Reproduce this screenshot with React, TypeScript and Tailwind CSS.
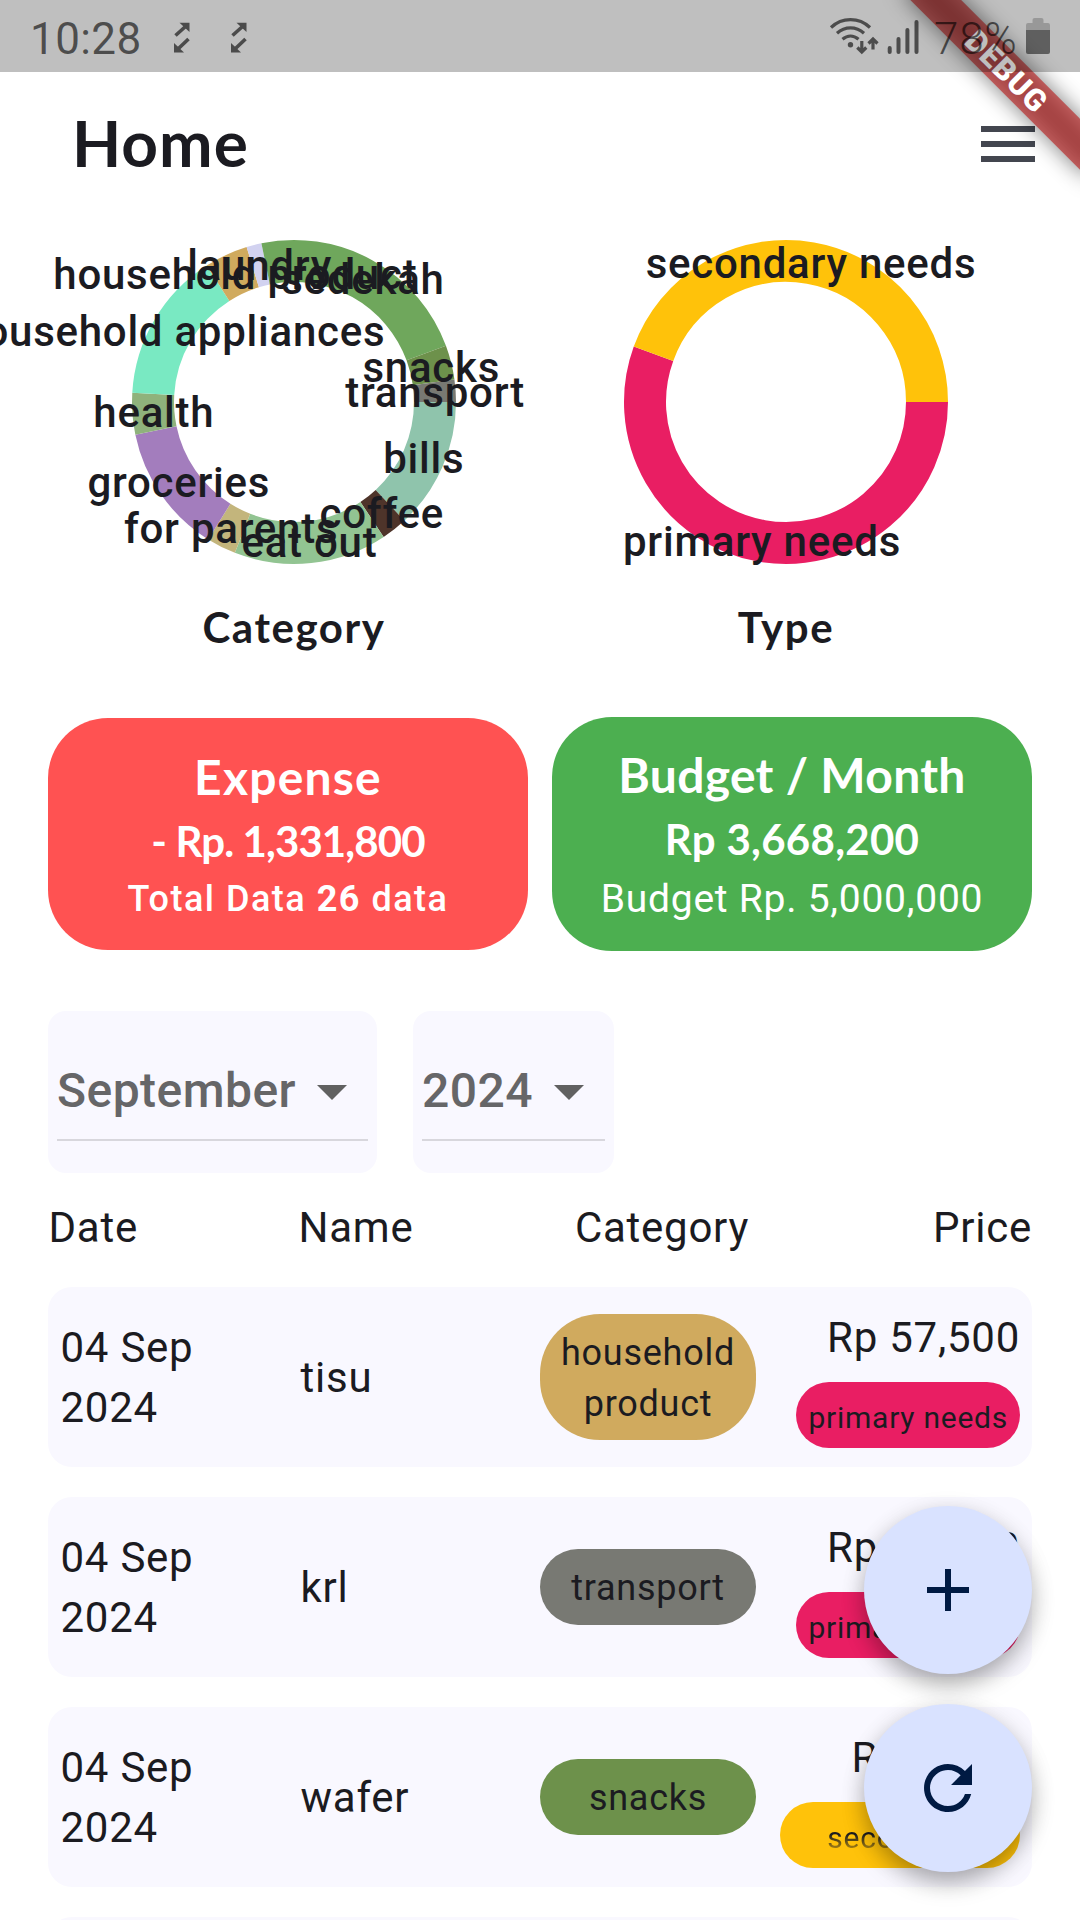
import React from "react";
import { MdAdd, MdArrowDropDown, MdMenu, MdRefresh } from "react-icons/md";

type Slice = { label: string; from: number; to: number; color: string };

const categorySlices: Slice[] = [
  { label: "bills", from: 0, to: 47.1, color: "#8fc4ac" },
  { label: "coffee", from: 47.1, to: 56.4, color: "#4e342a" },
  { label: "eat out", from: 56.4, to: 111.4, color: "#92c492" },
  { label: "for parents", from: 111.4, to: 122, color: "#c3b57c" },
  { label: "groceries", from: 122, to: 168.3, color: "#a37dbd" },
  { label: "health", from: 168.3, to: 183.3, color: "#8fb27c" },
  { label: "household appliances", from: 183.3, to: 237.4, color: "#79e9c2" },
  { label: "household product", from: 237.4, to: 253, color: "#d0aa5e" },
  { label: "laundry", from: 253, to: 258.4, color: "#d2d2f0" },
  { label: "sedekah", from: 258.4, to: 339.7, color: "#6fa75c" },
  { label: "snacks", from: 339.7, to: 352, color: "#6d914b" },
  { label: "transport", from: 352, to: 360, color: "#787973" },
];

const typeSlices: Slice[] = [
  { label: "primary needs", from: 0, to: 200, color: "#e91e63" },
  { label: "secondary needs", from: 200, to: 360, color: "#ffc20a" },
];

const rows = [
  { name: "tisu", category: "household product", categoryBg: "bg-[#d0aa5e]", price: "Rp 57,500", type: "primary needs", typeBg: "bg-[#e91e63]" },
  { name: "krl", category: "transport", categoryBg: "bg-[#787973]", price: "Rp 10,000", type: "primary needs", typeBg: "bg-[#e91e63]" },
  { name: "wafer", category: "snacks", categoryBg: "bg-[#6d914b]", price: "Rp 2,000", type: "secondary needs", typeBg: "bg-[#ffc20a]" },
  { name: "kopi", category: "coffee", categoryBg: "bg-[#4e342a]", price: "Rp 8,000", type: "secondary needs", typeBg: "bg-[#ffc20a]" },
];

const RADIUS = 141;
const CX = 246;
const CY = 186;

function point(angle: number) {
  const a = (angle * Math.PI) / 180;
  return { x: CX + RADIUS * Math.cos(a), y: CY + RADIUS * Math.sin(a) };
}

function Donut({ slices, title }: { slices: Slice[]; title: string }) {
  return (
    <div className="flex w-[492px] flex-col items-center">
      <svg width="492" height="372" viewBox="0 0 492 372" className="overflow-visible">
        {slices.map((s) => {
          const a = point(s.from);
          const b = point(s.to);
          const large = s.to - s.from > 180 ? 1 : 0;
          return (
            <path
              key={s.label}
              d={`M${a.x} ${a.y}A${RADIUS} ${RADIUS} 0 ${large} 1 ${b.x} ${b.y}`}
              fill="none"
              stroke={s.color}
              strokeWidth="42"
            />
          );
        })}
        {slices.map((s) => {
          const m = point((s.from + s.to) / 2);
          return (
            <text
              key={s.label}
              x={m.x + 0.5}
              y={m.y + 14.9}
              textAnchor="middle"
              className="fill-[#1b1b21] text-[42px] font-medium tracking-[0.75px]"
            >
              {s.label}
            </text>
          );
        })}
      </svg>
      <h2 className="pt-[3px] font-['Lato',sans-serif] text-[42px] leading-[72px] font-bold tracking-[1.600px]">{title}</h2>
    </div>
  );
}

function Dropdown({ label }: { label: string }) {
  return (
    <div className="h-[162px] rounded-[18px] bg-[#f9f8ff] px-[9px]">
      <div className="flex h-[130px] items-center border-b-2 border-[#d8d7dd] pt-[32px]">
        <span className="text-[48px] leading-[72px] font-medium tracking-[0.45px] text-[#666668]">{label}</span>
        <MdArrowDropDown className="size-[72px] text-[#616161]" />
      </div>
    </div>
  );
}

function SyncArrows() {
  return (
    <svg width="18" height="31" viewBox="0 0 18 31" fill="#4b4b4b" stroke="#4b4b4b">
      <path d="M6.500 .8H16.500V10Z" stroke="none" />
      <path d="M1 21V30.500H11Z" stroke="none" />
      <path d="M2.500 13.500 12.500 4.500M15.500 17 5.500 26.500" strokeWidth="3.600" />
    </svg>
  );
}

function StatusBar() {
  return (
    <div className="absolute inset-x-0 top-0 flex h-[72px] items-center justify-between bg-black/25 pr-[30px] pl-[30px] tracking-normal">
      <div className="flex items-center">
        <span className="w-[143px] pt-[6px] text-[44px] leading-[66px] tracking-[0.4px] text-black/60">10:28</span>
        <div className="flex gap-[39px] pt-[2px]">
          <SyncArrows />
          <SyncArrows />
        </div>
      </div>
      <div className="flex items-center text-black/60">
        <svg width="100" height="40" viewBox="828 17 100 40" fill="none" stroke="currentColor" strokeWidth="3.200">
          <path d="M831 28.500C842 18 859 18 870 28.500M837 34.300C845 27 856 27 864 34.300M842.500 40.300C847.500 36 853.500 36 858.500 40.300" />
          <circle cx="850.500" cy="45.700" r="2.700" fill="currentColor" stroke="none" />
          <path d="M861.800 42V53M857.300 48.500 861.800 53 866.300 48.500M873 50.500V40M868.500 44.500 873 40 877.500 44.500" />
          <path d="M889.700 49V53M898.500 40V53M907.400 31V53M916.500 23V53" strokeWidth="4" strokeLinecap="round" />
        </svg>
        <span className="ml-[6px] w-[92px] pt-[6px] text-[44px] leading-[66px] font-light tracking-[0.75px]">78%</span>
        <svg width="24" height="37" viewBox="0 0 24 37">
          <path d="M0 12V7Q0 5 2 5H6.500V2Q6.500 0 8.500 0H15.500Q17.500 0 17.500 2V5H22Q24 5 24 7V12Z" fill="#000" fillOpacity="0.2" />
          <path d="M0 12H24V34Q24 36 22 36H2Q0 36 0 34Z" fill="#000" fillOpacity="0.5" />
        </svg>
      </div>
    </div>
  );
}

function DebugBanner() {
  return (
    <div className="absolute top-0 right-0 size-[240px] overflow-hidden">
      <div className="absolute top-0 left-full h-[36px] w-[260px] origin-top-left rotate-45">
        <div className="absolute top-[84px] left-[-130px] h-[36px] w-[260px] bg-black/50 blur-[11px]" />
        <div className="absolute top-[84px] left-[-130px] h-[36px] w-[260px] bg-[#b71c1c]/63 pr-[3px] text-center text-[30.600px] leading-[38px] font-black text-white">
          DEBUG
        </div>
      </div>
    </div>
  );
}

function Fab({ children }: { children: React.ReactNode }) {
  return (
    <button className="flex size-[168px] items-center justify-center rounded-full bg-[#d9e2ff] text-[72px] text-[#001a43] shadow-[0_12px_24px_-2px_rgba(0,0,0,0.27),0_6px_24px_0_rgba(0,0,0,0.12)]">
      {children}
    </button>
  );
}

export default function App() {
  return (
    <div className="relative h-[1920px] w-[1080px] overflow-hidden bg-white pt-[72px] font-['Roboto',sans-serif] text-[42px] leading-[60px] tracking-[0.75px] text-[#1b1b21]">
      <header className="flex h-[144px] items-center justify-between pr-9 pl-[72px]">
        <h1 className="pb-[3px] font-['Lato',sans-serif] text-[64px] leading-[80px] font-bold tracking-[1px]">Home</h1>
        <MdMenu className="size-[72px] text-[#43464f]" />
      </header>

      <main className="px-12">
        <section className="flex">
          <Donut slices={categorySlices} title="Category" />
          <Donut slices={typeSlices} title="Type" />
        </section>

        <section className="mt-[54px] flex h-[234px] items-center gap-6 text-center text-white">
          <div className="flex h-[232px] w-[480px] flex-col items-center rounded-[60px] bg-[#ff5252] pt-[25px]">
            <div className="font-['Lato',sans-serif] text-[48px] leading-[68px] font-bold tracking-[1.200px]">Expense</div>
            <div className="font-['Lato',sans-serif] text-[42px] leading-[60px] font-bold tracking-[-0.900px]">- Rp. 1,331,800</div>
            <div className="pt-[3px] text-[36px] leading-[51px] font-medium tracking-[1.500px]">
              Total Data <b className="font-bold">26</b> data
            </div>
          </div>
          <div className="flex h-[234px] w-[480px] flex-col items-center rounded-[60px] bg-[#4caf50] pt-[24px]">
            <div className="font-['Lato',sans-serif] text-[48px] leading-[68px] font-bold tracking-[0.300px]">Budget / Month</div>
            <div className="font-['Lato',sans-serif] text-[42px] leading-[60px] font-bold tracking-[0.300px]">Rp 3,668,200</div>
            <div className="pt-[2px] text-[39px] leading-[56px]">Budget Rp. 5,000,000</div>
          </div>
        </section>

        <section className="mt-[60px] flex gap-9">
          <Dropdown label="September" />
          <Dropdown label="2024" />
        </section>

        <div className="mt-[25px] flex">
          <div className="w-[250px] pl-[0.5px]">Date</div>
          <div className="w-[230px] pl-[0.5px]">Name</div>
          <div className="w-[268px] text-center">Category</div>
          <div className="flex-1 text-right">Price</div>
        </div>

        <section className="mt-[29px] flex flex-col gap-[30px]">
          {rows.map((r) => (
            <div key={r.name} className="flex h-[180px] items-center rounded-[24px] bg-[#f9f8ff] px-3">
              <div className="w-[240px] pt-[2px] pr-20 pl-[0.5px]">04 Sep 2024</div>
              <div className="w-[240px] pt-[2px] pl-[0.5px]">{r.name}</div>
              <div className={`w-[216px] rounded-[60px] px-3 pt-[14px] pb-[10px] text-center text-[36px] leading-[51.400px] ${r.categoryBg}`}>
                {r.category}
              </div>
              <div className="flex flex-1 flex-col items-end gap-[14px] pt-px">
                <div>{r.price}</div>
                <div className={`h-[66px] max-w-[240px] overflow-hidden rounded-[33px] px-3 pt-[14px] ${r.typeBg}`}>
                  <div
                    className={`h-[43px] overflow-hidden text-center text-[30px] leading-[43px] ${
                      r.type === "secondary needs"
                        ? "mask-[linear-gradient(to_bottom,black_42%,rgba(0,0,0,0.35)_78%)]"
                        : "whitespace-nowrap"
                    }`}
                  >
                    {r.type}
                  </div>
                </div>
              </div>
            </div>
          ))}
        </section>
      </main>

      <div className="absolute right-12 bottom-12 flex flex-col gap-[30px]">
        <Fab>
          <MdAdd />
        </Fab>
        <Fab>
          <MdRefresh />
        </Fab>
      </div>

      <DebugBanner />
      <StatusBar />
    </div>
  );
}
